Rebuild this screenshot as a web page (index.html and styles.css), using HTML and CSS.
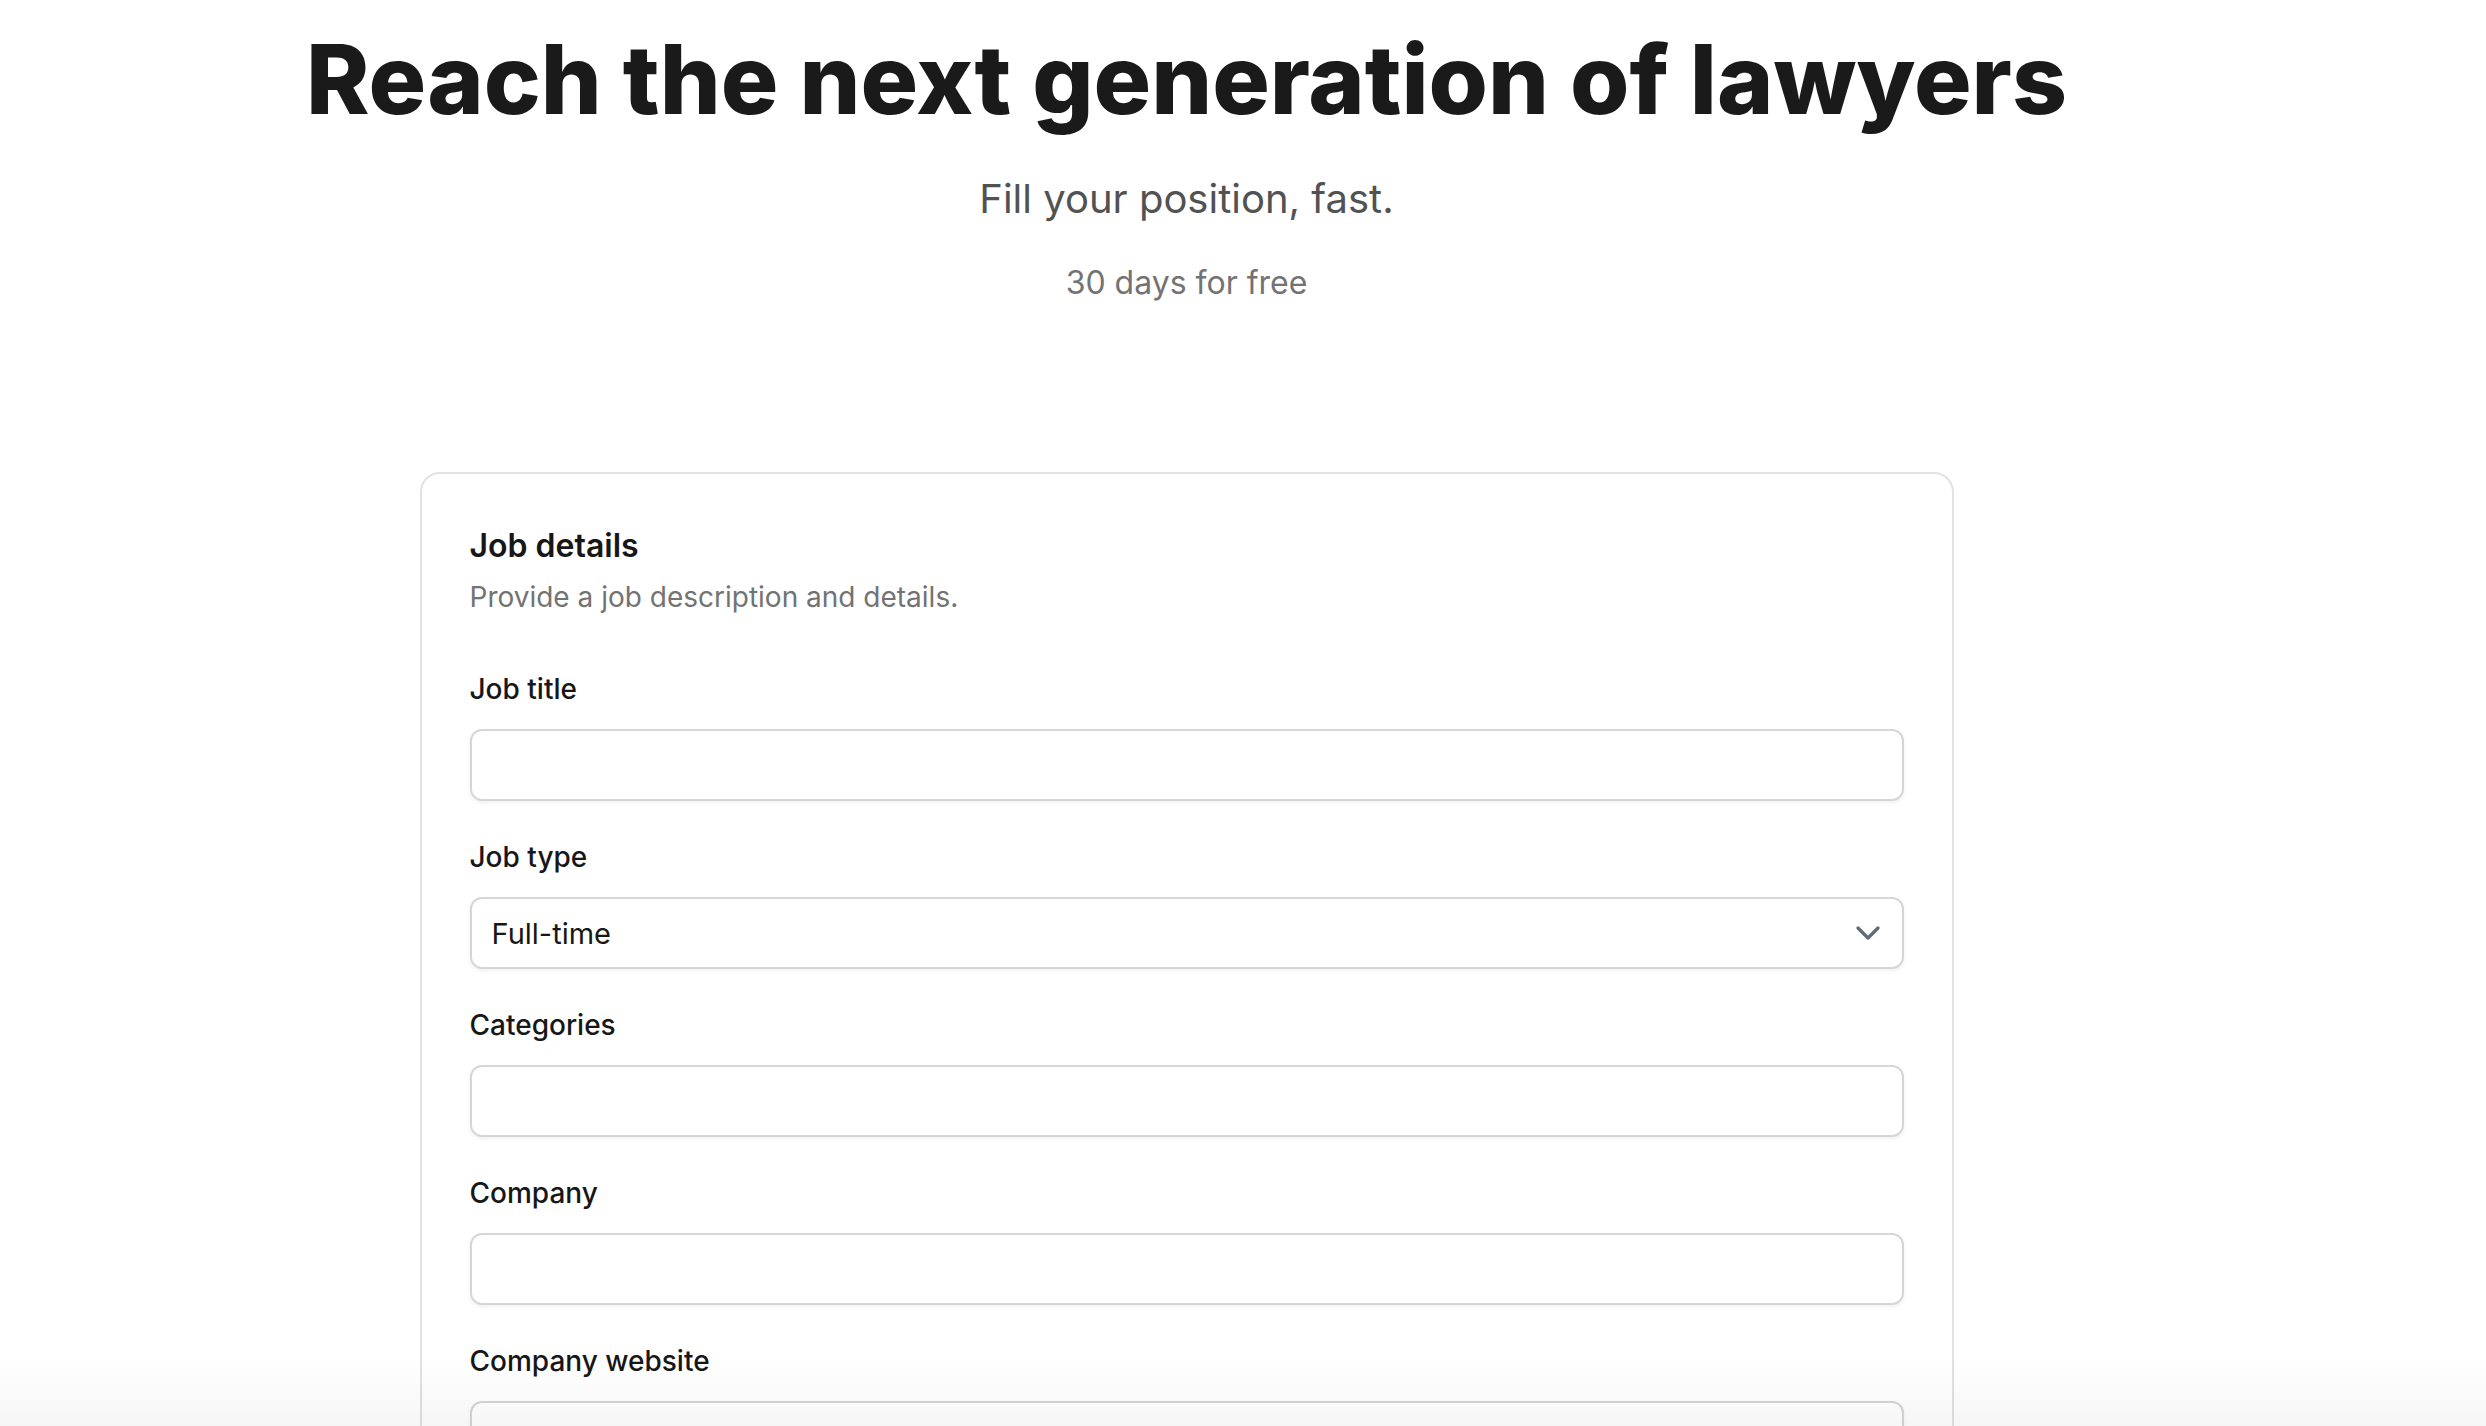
FILE: index.html
```html
<!DOCTYPE html>
<html lang="en">
<head>
<meta charset="utf-8">
<title>Post a job</title>
<link rel="stylesheet" href="styles.css">
</head>
<body>
<div class="page">
  <header class="hero">
    <h1 class="hero-title">Reach the next generation of lawyers</h1>
    <p class="hero-sub">Fill your position, fast.</p>
    <p class="hero-note">30 days for free</p>
  </header>

  <form class="card">
    <div class="card-head">
      <h2 class="card-title">Job details</h2>
      <p class="card-desc">Provide a job description and details.</p>
    </div>
    <div class="fields">
      <div class="field">
        <label class="label" for="title">Job title</label>
        <input class="input" id="title" type="text">
      </div>
      <div class="field">
        <label class="label" for="type">Job type</label>
        <div class="select">
          <span class="select-value">Full-time</span>
          <svg class="chevron" viewBox="0 0 24 24" width="40" height="40" fill="none" stroke="currentColor" stroke-width="2" stroke-linecap="round" stroke-linejoin="round"><path d="m6 9 6 6 6-6"/></svg>
        </div>
      </div>
      <div class="field">
        <label class="label" for="cats">Categories</label>
        <input class="input" id="cats" type="text">
      </div>
      <div class="field">
        <label class="label" for="company">Company</label>
        <input class="input" id="company" type="text">
      </div>
      <div class="field">
        <label class="label" for="site">Company website</label>
        <input class="input" id="site" type="text">
      </div>
      <div class="field">
        <label class="label" for="loc">Location</label>
        <input class="input" id="loc" type="text">
      </div>
    </div>
  </form>
</div>
<div class="bottom-fade"></div>
</body>
</html>
```

FILE: styles.css
```css
* { box-sizing: border-box; }

html, body {
  margin: 0;
  background: #ffffff;
  font-family: Inter, "Noto Sans", "Liberation Sans", sans-serif;
  color: #171717;
}

.page {
  max-width: 2373px;
  display: flex;
  flex-direction: column;
  align-items: center;
  padding-top: 31px;
  padding-bottom: 200px;
}

.hero {
  display: flex;
  flex-direction: column;
  align-items: center;
  text-align: center;
}

.hero-title {
  margin: 0;
  font-size: 96px;
  line-height: 96px;
  font-weight: 800;
  letter-spacing: 0;
  color: #1a1a1a;
}

.hero-sub {
  margin: 44px 0 0;
  font-size: 40px;
  line-height: 56px;
  color: #525252;
}

.hero-note {
  margin: 32px 0 0;
  font-size: 32px;
  line-height: 48px;
  color: #737373;
}

.card {
  margin-top: 165px;
  width: 1534px;
  border: 2px solid #e2e2e2;
  border-radius: 20px;
  padding: 48px;
  background: #fff;
}

.card-title {
  margin: 0;
  font-size: 32px;
  line-height: 48px;
  font-weight: 600;
  color: #171717;
}

.card-desc {
  margin: 7px 0 0;
  font-size: 28px;
  line-height: 40px;
  color: #737373;
}

.fields {
  margin-top: 52px;
  display: flex;
  flex-direction: column;
  gap: 36px;
}

.field {
  display: flex;
  flex-direction: column;
  gap: 20px;
}

.label {
  font-size: 28px;
  line-height: 40px;
  font-weight: 500;
  color: #171717;
}

.input,
.select {
  height: 72px;
  width: 100%;
  border: 2px solid #d6d6d6;
  border-radius: 12px;
  background: #fff;
  box-shadow: 0 2px 4px rgba(0, 0, 0, 0.06);
  font-family: inherit;
  font-size: 28px;
  padding: 0 20px;
  outline: none;
}

.select {
  display: flex;
  align-items: center;
  justify-content: space-between;
  padding: 0 14px 0 20px;
}

.select-value {
  font-size: 29px;
  color: #171717;
}

.chevron {
  color: #646b78;
  display: block;
}

.bottom-fade {
  position: fixed;
  left: 0;
  right: 0;
  bottom: 0;
  height: 70px;
  background: linear-gradient(to bottom, rgba(0, 0, 0, 0), rgba(0, 0, 0, 0.035));
  pointer-events: none;
}
```
